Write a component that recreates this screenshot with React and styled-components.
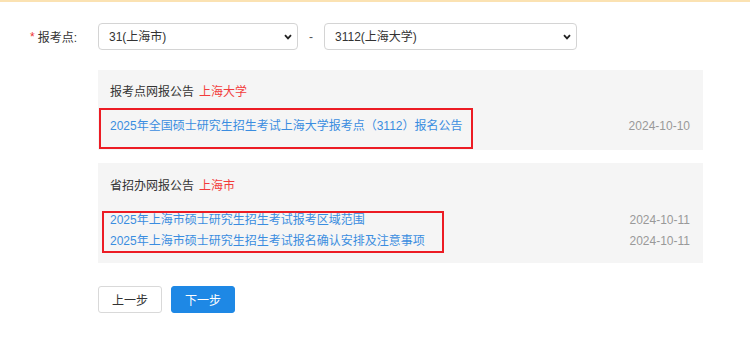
import React from 'react';
import styled, { createGlobalStyle } from 'styled-components';

const GlobalStyle = createGlobalStyle`
  body {
    margin: 0;
    background: #fff;
    font-family: "Liberation Sans", Arial, "Noto Sans CJK SC", sans-serif;
    font-size: 12px;
    color: #333;
  }
`;

const Page = styled.div`
  width: 750px;
  height: 341px;
  border-top: 2px solid #fbe2b2;
  box-sizing: border-box;
  overflow: hidden;
`;

const FormRow = styled.div`
  display: flex;
  align-items: center;
  padding: 21px 0 0 30px;
  height: 27px;
`;

const Label = styled.label`
  width: 68px;
  font-size: 12px;
  color: #333;
  display: flex;
  align-items: center;
`;

const Star = styled.span`
  color: #e33;
  margin-right: 3px;
  font-size: 12px;
`;

const SelectWrap = styled.div`
  position: relative;
  width: ${(p) => p.width}px;
  height: 27px;
`;

const Select = styled.select`
  appearance: none;
  width: 100%;
  height: 100%;
  border: 1px solid #d4d4d4;
  border-radius: 4px;
  background: #fff;
  padding: 0 0 0 10px;
  font-family: inherit;
  font-size: 12px;
  color: #333;
  outline: none;
`;

const Chevron = styled.svg`
  position: absolute;
  right: 6px;
  top: 11px;
  pointer-events: none;
`;

const Dash = styled.span`
  width: 26px;
  text-align: center;
  color: #555;
`;

const Panel = styled.div`
  margin: ${(p) => p.top}px 47px 0 98px;
  background: #f5f5f5;
  padding: ${(p) => p.pad};
  box-sizing: border-box;
  height: ${(p) => p.height}px;
`;

const PanelTitle = styled.div`
  line-height: 15px;
  color: #333;
`;

const Region = styled.span`
  color: #f23c3c;
  margin-left: 5px;
`;

const ItemRow = styled.div`
  display: flex;
  justify-content: space-between;
  align-items: flex-start;
  margin-top: ${(p) => p.gap}px;
`;

const Highlight = styled.div`
  border: 2px solid #ec1c24;
  margin-left: ${(p) => p.shift}px;
  padding: ${(p) => p.pad};
  width: ${(p) => p.width}px;
  box-sizing: border-box;
  display: flex;
  flex-direction: column;
  gap: 6px;
`;

const Link = styled.a`
  color: #3a8de0;
  text-decoration: none;
  line-height: 15px;
  white-space: nowrap;
`;

const DateCol = styled.div`
  display: flex;
  flex-direction: column;
  gap: 6px;
  padding-top: ${(p) => p.top}px;
`;

const DateText = styled.span`
  color: #999;
  line-height: 15px;
`;

const Buttons = styled.div`
  display: flex;
  gap: 9px;
  margin: 23px 0 0 98px;
`;

const Button = styled.button`
  width: 64px;
  height: 27px;
  border-radius: 3px;
  font-family: inherit;
  font-size: 12px;
  cursor: pointer;
  border: 1px solid ${(p) => (p.primary ? '#1e88e5' : '#d9d9d9')};
  background: ${(p) => (p.primary ? '#1e88e5' : '#fff')};
  color: ${(p) => (p.primary ? '#fff' : '#333')};
`;

const ChevronIcon = () => (
  <Chevron width="8" height="6" viewBox="0 0 8 6">
    <path d="M1 1.2 L4 4.4 L7 1.2" fill="none" stroke="#222" strokeWidth="1.8" />
  </Chevron>
);

export default function App() {
  return (
    <Page>
      <GlobalStyle />
      <FormRow>
        <Label>
          <Star>*</Star>报考点:
        </Label>
        <SelectWrap width={200}>
          <Select defaultValue="31">
            <option value="31">31(上海市)</option>
          </Select>
          <ChevronIcon />
        </SelectWrap>
        <Dash>-</Dash>
        <SelectWrap width={253}>
          <Select defaultValue="3112">
            <option value="3112">3112(上海大学)</option>
          </Select>
          <ChevronIcon />
        </SelectWrap>
      </FormRow>

      <Panel top={20} height={80} pad="15px 13px 0 12px">
        <PanelTitle>
          报考点网报公告<Region>上海大学</Region>
        </PanelTitle>
        <ItemRow gap={8}>
          <Highlight shift={-11} width={374} pad="9px 0 13px 9px">
            <Link href="#">2025年全国硕士研究生招生考试上海大学报考点（3112）报名公告</Link>
          </Highlight>
          <DateCol top={11}>
            <DateText>2024-10-10</DateText>
          </DateCol>
        </ItemRow>
      </Panel>

      <Panel top={13} height={100} pad="16px 13px 0 12px">
        <PanelTitle>
          省招办网报公告<Region>上海市</Region>
        </PanelTitle>
        <ItemRow gap={17}>
          <Highlight shift={-8} width={342} pad="0 0 2px 6px">
            <Link href="#">2025年上海市硕士研究生招生考试报考区域范围</Link>
            <Link href="#">2025年上海市硕士研究生招生考试报名确认安排及注意事项</Link>
          </Highlight>
          <DateCol top={2}>
            <DateText>2024-10-11</DateText>
            <DateText>2024-10-11</DateText>
          </DateCol>
        </ItemRow>
      </Panel>

      <Buttons>
        <Button>上一步</Button>
        <Button primary>下一步</Button>
      </Buttons>
    </Page>
  );
}
